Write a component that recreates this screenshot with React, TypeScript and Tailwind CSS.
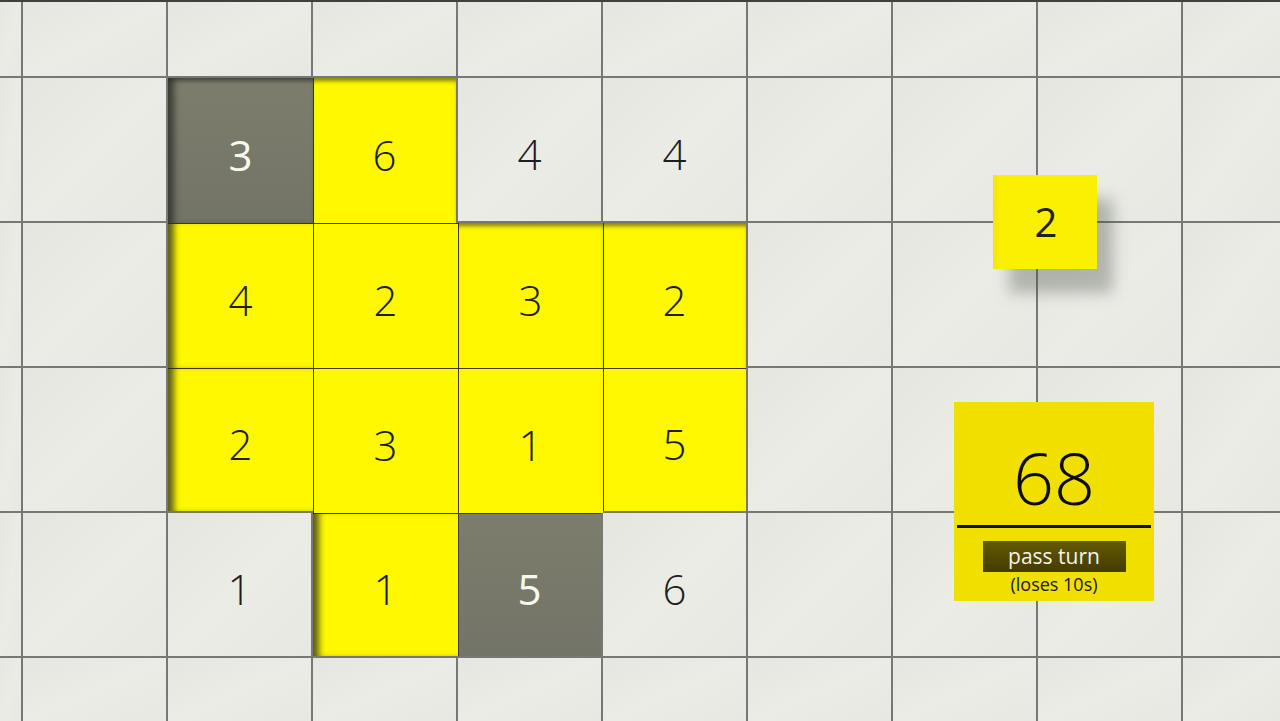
import { Fragment } from 'react'

type Kind = 'floor' | 'tile' | 'yellow' | 'gray'
type Cell = { kind: Kind; n?: number }

const COLS = 10
const ROWS = 6

// tiles placed on the board, keyed "row,col"
const TILES: Record<string, Cell> = {
  '1,2': { kind: 'gray', n: 3 },
  '1,3': { kind: 'yellow', n: 6 },
  '1,4': { kind: 'tile', n: 4 },
  '1,5': { kind: 'tile', n: 4 },
  '2,2': { kind: 'yellow', n: 4 },
  '2,3': { kind: 'yellow', n: 2 },
  '2,4': { kind: 'yellow', n: 3 },
  '2,5': { kind: 'yellow', n: 2 },
  '3,2': { kind: 'yellow', n: 2 },
  '3,3': { kind: 'yellow', n: 3 },
  '3,4': { kind: 'yellow', n: 1 },
  '3,5': { kind: 'yellow', n: 5 },
  '4,2': { kind: 'tile', n: 1 },
  '4,3': { kind: 'yellow', n: 1 },
  '4,4': { kind: 'gray', n: 5 },
  '4,5': { kind: 'tile', n: 6 },
}

const cellAt = (r: number, c: number): Cell => TILES[`${r},${c}`] ?? { kind: 'floor' }
const isSunk = (r: number, c: number) => {
  const k = cellAt(r, c).kind
  return k === 'yellow' || k === 'gray'
}

// inner shadow along edges that meet the raised floor
const EDGE_SHADOW = {
  none: 'shadow-[inset_1px_1px_0_#3f3d10]',
  left: 'shadow-[inset_9px_0_6px_-3px_rgba(40,44,38,0.75),inset_0_1px_0_#3f3d10]',
  top: 'shadow-[inset_0_5px_4px_-2px_rgba(40,44,38,0.6),inset_1px_0_0_#3f3d10]',
  both: 'shadow-[inset_9px_0_6px_-3px_rgba(40,44,38,0.75),inset_0_5px_4px_-2px_rgba(40,44,38,0.6)]',
}

function BoardCell({ r, c }: { r: number; c: number }) {
  const cell = cellAt(r, c)

  if (cell.kind === 'floor' || cell.kind === 'tile') {
    return (
      <div className="flex items-center justify-center bg-linear-to-br from-[#e5e6e0] via-[#ecece7] to-[#e7e8e2] pt-[7px] text-[42px] font-light text-[#1e1e1c]">
        {cell.n}
      </div>
    )
  }

  const openLeft = !isSunk(r, c - 1)
  const openTop = !isSunk(r - 1, c)
  const shadow = openLeft && openTop ? EDGE_SHADOW.both : openLeft ? EDGE_SHADOW.left : openTop ? EDGE_SHADOW.top : EDGE_SHADOW.none

  return (
    <div
      className={[
        'flex items-center justify-center pt-[7px] text-[42px]',
        isSunk(r, c + 1) ? '-mr-[2px]' : '',
        isSunk(r + 1, c) ? '-mb-[2px]' : '',
        cell.kind === 'yellow'
          ? 'bg-[#fff800] font-light text-[#1e1e14]'
          : 'bg-linear-to-b from-[#7d7d6c] to-[#737468] font-normal text-[#f7f7f2]',
        shadow,
      ].join(' ')}
    >
      {cell.n}
    </div>
  )
}

function Die() {
  return (
    <div className="absolute left-[993px] top-[173px] flex h-[94px] w-[104px] shadow-[16px_24px_14px_rgba(70,80,65,0.35)]">
      <div className="w-[8px] bg-linear-to-r from-[#f2e800] to-[#f9f200]" />
      <div className="flex flex-1 items-center justify-center bg-[#fbf000] pr-[6px] text-[40px] text-[#222210]">2</div>
    </div>
  )
}

function TurnPanel() {
  return (
    <div className="absolute left-[954px] top-[400px] flex h-[199px] w-[200px] flex-col items-center bg-[#f1df00] px-[3px]">
      <div className="mt-[32px] h-[86px] text-[72px] leading-[86px] font-light text-[#0d0d08]">68</div>
      <div className="mt-[5px] h-[3px] w-full bg-[#141208]" />
      <button className="mt-[13px] h-[31px] w-[143px] bg-linear-to-b from-[#655a00] to-[#443b00] text-[21px] leading-[31px] text-[#f5f3e6]">
        pass turn
      </button>
      <div className="mt-[1px] text-[18px] leading-[22px] text-[#1a1808]">(loses 10s)</div>
    </div>
  )
}

export default function App() {
  return (
    <div className="relative h-[721px] w-[1280px] overflow-hidden border-t-2 border-[#3e403c] font-['Open_Sans',sans-serif]">
      <div className="grid h-full grid-cols-[21px_repeat(8,143px)_1fr] grid-rows-[74px_repeat(4,143px)_1fr] gap-[2px] bg-[#767973]">
        {Array.from({ length: ROWS }).map((_, r) => (
          <Fragment key={r}>
            {Array.from({ length: COLS }).map((_, c) => (
              <BoardCell key={c} r={r} c={c} />
            ))}
          </Fragment>
        ))}
      </div>
      <Die />
      <TurnPanel />
    </div>
  )
}
